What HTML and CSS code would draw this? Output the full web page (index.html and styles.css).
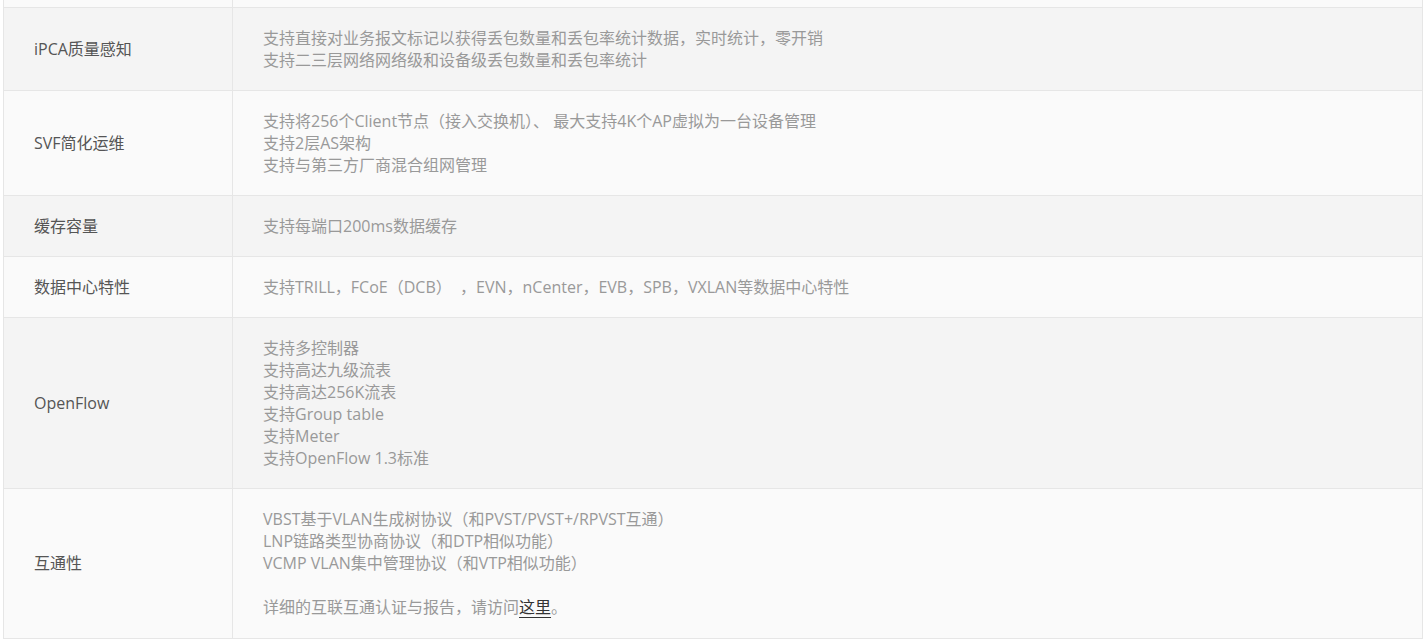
FILE: index.html
```html
<!DOCTYPE html>
<html lang="zh-CN">
<head>
<meta charset="utf-8">
<title>规格</title>
<link rel="stylesheet" href="styles.css">
</head>
<body>
<table class="spec">
  <colgroup>
    <col class="col-name">
    <col class="col-desc">
  </colgroup>
  <tbody>
    <tr class="row-even row-cut"><td class="name"></td><td class="desc"></td></tr>
    <tr class="row-odd">
      <td class="name">iPCA质量感知</td>
      <td class="desc">支持直接对业务报文标记以获得丢包数量和丢包率统计数据，实时统计，零开销<br>支持二三层网络网络级和设备级丢包数量和丢包率统计</td>
    </tr>
    <tr class="row-even">
      <td class="name">SVF简化运维</td>
      <td class="desc">支持将256个Client节点（接入交换机）、 最大支持4K个AP虚拟为一台设备管理<br>支持2层AS架构<br>支持与第三方厂商混合组网管理</td>
    </tr>
    <tr class="row-odd">
      <td class="name">缓存容量</td>
      <td class="desc">支持每端口200ms数据缓存</td>
    </tr>
    <tr class="row-even">
      <td class="name">数据中心特性</td>
      <td class="desc">支持TRILL，FCoE（DCB）&nbsp; ，EVN，nCenter，EVB，SPB，VXLAN等数据中心特性</td>
    </tr>
    <tr class="row-odd">
      <td class="name">OpenFlow</td>
      <td class="desc">支持多控制器<br>支持高达九级流表<br>支持高达256K流表<br>支持Group table<br>支持Meter<br>支持OpenFlow 1.3标准</td>
    </tr>
    <tr class="row-even row-last">
      <td class="name">互通性</td>
      <td class="desc">VBST基于VLAN生成树协议（和PVST/PVST+/RPVST互通）<br>LNP链路类型协商协议（和DTP相似功能）<br>VCMP VLAN集中管理协议（和VTP相似功能）<br><br>详细的互联互通认证与报告，请访问<a class="link" href="#">这里</a>。</td>
    </tr>
  </tbody>
</table>
</body>
</html>
```
FILE: styles.css
```css
html, body {
  margin: 0;
  padding: 0;
  background: #ffffff;
}
body {
  padding: 0 4px 0 3px;
  font-family: "Open Sans", "Noto Sans CJK SC", sans-serif;
  font-size: 16px;
  line-height: 22px;
}
.spec {
  width: 100%;
  border-collapse: collapse;
  table-layout: fixed;
}
.col-name {
  width: 229px;
}
.spec td {
  border: 1px solid #e6e6e6;
  padding: 19px 30px;
  vertical-align: middle;
  text-align: left;
}
.spec td.name {
  color: #555555;
}
.spec td.desc {
  color: #999999;
}
.row-odd td {
  background: #f4f4f4;
}
.row-even td {
  background: #fafafa;
}
.row-cut td {
  padding: 0;
  height: 7px;
  border-top: none;
}
.row-last td {
  padding-bottom: 20px;
}
.link {
  color: #333333;
  text-decoration: underline;
  text-underline-offset: 4px;
}
```
